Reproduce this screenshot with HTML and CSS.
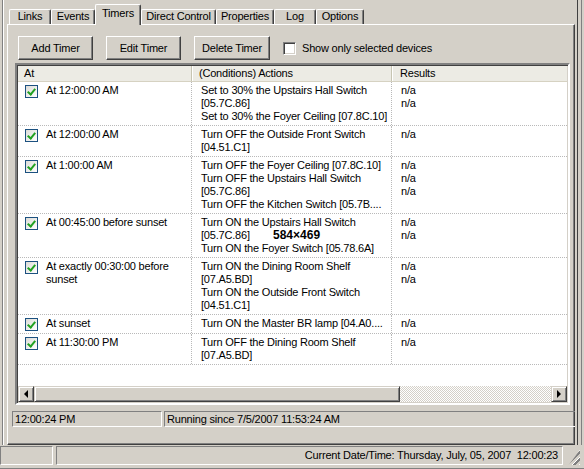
FILE: index.html
```html
<!DOCTYPE html>
<html lang="en">
<head>
  <meta charset="UTF-8">
  <title>Timers</title>
  <link rel="stylesheet" href="styles.css">
</head>
<body>
  <div class="window">
    <div class="workspace">
      <div class="frame-left"></div>
      <div class="tabctl">
        <div class="tabs">
          <div class="tab">Links</div>
          <div class="tab">Events</div>
          <div class="tab active">Timers</div>
          <div class="tab">Direct Control</div>
          <div class="tab">Properties</div>
          <div class="tab">Log</div>
          <div class="tab">Options</div>
        </div>
        <div class="panel">
          <div class="toolbar">
            <button class="btn">Add Timer</button>
            <button class="btn">Edit Timer</button>
            <button class="btn">Delete Timer</button>
            <label class="opt"><span class="opt-box"></span>Show only selected devices</label>
          </div>

          <div class="list">
            <div class="list-head">
              <div class="hcell">At</div>
              <div class="hcell">(Conditions) Actions</div>
              <div class="hcell">Results</div>
            </div>
            <div class="list-body">
              <div class="row">
                <div class="cell at"><span class="chk"></span><span>At 12:00:00 AM</span></div>
                <div class="cell">Set to 30% the Upstairs Hall Switch<br>[05.7C.86]<br>Set to 30% the Foyer Ceiling [07.8C.10]</div>
                <div class="cell res">n/a<br>n/a</div>
              </div>
              <div class="row">
                <div class="cell at"><span class="chk"></span><span>At 12:00:00 AM</span></div>
                <div class="cell">Turn OFF the Outside Front Switch<br>[04.51.C1]</div>
                <div class="cell res">n/a</div>
              </div>
              <div class="row">
                <div class="cell at"><span class="chk"></span><span>At 1:00:00 AM</span></div>
                <div class="cell">Turn OFF the Foyer Ceiling [07.8C.10]<br>Turn OFF the Upstairs Hall Switch<br>[05.7C.86]<br>Turn OFF the Kitchen Switch [05.7B....</div>
                <div class="cell res">n/a<br>n/a<br>n/a</div>
              </div>
              <div class="row">
                <div class="cell at"><span class="chk"></span><span>At 00:45:00 before sunset</span></div>
                <div class="cell">Turn ON the Upstairs Hall Switch<br>[05.7C.86]<br>Turn ON the Foyer Switch [05.78.6A]</div>
                <div class="cell res">n/a<br>n/a</div>
              </div>
              <div class="row">
                <div class="cell at"><span class="chk"></span><span>At exactly 00:30:00 before<br>sunset</span></div>
                <div class="cell">Turn ON the Dining Room Shelf<br>[07.A5.BD]<br>Turn ON the Outside Front Switch<br>[04.51.C1]</div>
                <div class="cell res">n/a<br>n/a</div>
              </div>
              <div class="row">
                <div class="cell at"><span class="chk"></span><span>At sunset</span></div>
                <div class="cell">Turn ON the Master BR lamp [04.A0....</div>
                <div class="cell res">n/a</div>
              </div>
              <div class="row">
                <div class="cell at"><span class="chk"></span><span>At 11:30:00 PM</span></div>
                <div class="cell">Turn OFF the Dining Room Shelf<br>[07.A5.BD]</div>
                <div class="cell res">n/a</div>
              </div>
              <div class="size-tag">584×469</div>
            </div>
            <div class="hscroll">
              <div class="sb-btn"><span class="arr-left"></span></div>
              <div class="sb-thumb"></div>
              <div class="sb-track"></div>
              <div class="sb-btn"><span class="arr-right"></span></div>
            </div>
          </div>

          <div class="status-row">
            <div class="sunk clock">12:00:24 PM</div>
            <div class="sunk since">Running since 7/5/2007 11:53:24 AM</div>
          </div>
        </div>
      </div>
      <div class="frame-right"></div>
    </div>

    <div class="statusbar">
      <div class="sb-pane first"></div>
      <div class="sb-pane main">Current Date/Time: Thursday, July, 05, 2007&nbsp; 12:00:23</div>
      <div class="grip"></div>
    </div>
  </div>
</body>
</html>
```

FILE: styles.css
```css
* { box-sizing: border-box; }
body { margin: 0; background: #d4d0c8; font-family: "Liberation Sans", Arial, sans-serif; font-size: 11px; letter-spacing: -0.2px; color: #000; }
.window { width: 584px; height: 469px; display: flex; flex-direction: column; overflow: hidden; background: #d4d0c8; }
.workspace { display: flex; height: 446px; }
.frame-left { width: 7px; background: linear-gradient(to right, #d4d0c8 2px, #808080 2px 3px, #fff 3px 4px, #d4d0c8 4px); }
.frame-right { flex: 1; background: linear-gradient(to right, #d4d0c8 2px, #404040 2px 3px, #d4d0c8 3px 6px, #808080 6px 7px, #d4d0c8 7px); }

/* tabs */
.tabctl { width: 568px; display: flex; flex-direction: column; padding-top: 4px; }
.tabs { display: flex; align-items: flex-end; height: 20px; padding-left: 2px; position: relative; z-index: 2; }
.tab { height: 15px; line-height: 13px; text-align: center; border: 1px solid #fff; border-bottom: none; border-right-color: #404040; box-shadow: inset -1px 0 #808080; border-radius: 2px 2px 0 0; }
.tab:nth-child(1) { width: 42px; }
.tab:nth-child(2) { width: 44px; }
.tab:nth-child(3) { width: 46px; }
.tab:nth-child(4) { width: 75px; }
.tab:nth-child(5) { width: 58px; }
.tab:nth-child(6) { width: 42px; }
.tab:nth-child(7) { width: 48px; }
.tab.active { height: 21px; line-height: 17px; background: #d4d0c8; margin-bottom: -1px; }
.panel { flex: 1; border: 1px solid #fff; border-right-color: #404040; border-bottom-color: #404040; box-shadow: inset -1px -1px #808080; padding: 11px 4px 0 7px; }

/* toolbar */
.toolbar { display: flex; align-items: center; gap: 13px; padding-left: 3px; height: 24px; }
.btn { width: 75px; height: 24px; font: inherit; letter-spacing: inherit; color: #000; background: #d4d0c8; border: 1px solid; border-color: #fff #404040 #404040 #fff; box-shadow: inset -1px -1px #808080; padding: 0; }
.btn:nth-child(3) { width: 76px; }
.opt { display: flex; align-items: center; gap: 6px; }
.opt-box { width: 13px; height: 13px; background: #fff; border: 1px solid; border-color: #808080 #fff #fff #808080; box-shadow: inset 1px 1px #404040, inset -1px -1px #d4d0c8; }

/* list view */
.list { margin-top: 3px; width: 555px; height: 342px; display: flex; flex-direction: column; border: 2px solid; border-color: #808080 #fff #fff #808080; box-shadow: inset 1px 1px #404040, inset -1px -1px #d4d0c8; padding: 1px; background: #fff; }
.list-head { display: grid; grid-template-columns: 174px 200px 1fr; height: 16px; background: #ecebe4; border-bottom: 1px solid #d6d2c2; }
.hcell { line-height: 15px; padding-left: 6px; border-right: 1px solid #c7c5b2; box-shadow: 1px 0 #fff; }
.hcell:nth-child(2) { padding-left: 7px; }
.hcell:nth-child(3) { padding-left: 8px; border-right: none; box-shadow: none; }
.list-body { flex: 1; position: relative; }
.row { display: grid; grid-template-columns: 174px 200px 1fr; border-bottom: 1px dotted #b9b9b9; }
.cell { padding: 2px 0 2px 9px; line-height: 13px; white-space: nowrap; border-right: 1px dotted #b9b9b9; overflow: hidden; }
.cell.res { border-right: none; }
.cell.at { display: flex; align-items: flex-start; gap: 8px; padding-left: 7px; }
.chk { width: 13px; height: 13px; margin-top: 1px; flex: none; border: 1px solid #1c5180; background: linear-gradient(135deg, #dcdcd7, #fff); position: relative; }
.chk::after { content: ""; position: absolute; left: 3px; top: 1px; width: 3px; height: 6px; border: solid #21a121; border-width: 0 2px 2px 0; transform: rotate(40deg); }
.size-tag { position: absolute; left: 255px; top: 146px; font-weight: bold; font-size: 12px; letter-spacing: 0; }

/* horizontal scrollbar */
.hscroll { display: flex; height: 16px; }
.sb-btn, .sb-thumb { background: #d4d0c8; border: 1px solid; border-color: #d4d0c8 #404040 #404040 #d4d0c8; box-shadow: inset 1px 1px #fff, inset -1px -1px #808080; display: flex; align-items: center; justify-content: center; }
.sb-btn { width: 16px; }
.sb-thumb { width: 366px; }
.sb-track { flex: 1; background: repeating-conic-gradient(#fff 0 25%, #d4d0c8 0 50%) 0 0 / 2px 2px; }
.arr-left { border: 4px solid transparent; border-right-color: #000; border-left: none; }
.arr-right { border: 4px solid transparent; border-left-color: #000; border-right: none; }

/* status row */
.status-row { display: flex; gap: 2px; margin: 6px 0 0 -3px; height: 16px; width: 571px; }
.sunk { border: 1px solid; border-color: #808080 #fff #fff #808080; line-height: 14px; padding-left: 2px; white-space: nowrap; }
.clock { width: 150px; }
.since { flex: 1; }

/* window status bar */
.statusbar { flex: 1; display: flex; gap: 3px; padding: 1px 4px 3px 0; border-bottom: 1px solid #808080; }
.sb-pane { border: 1px solid; border-color: #808080 #fff #fff #808080; line-height: 17px; }
.sb-pane.first { width: 53px; }
.sb-pane.main { flex: 1; text-align: right; padding-right: 4px; }
.grip { width: 14px; background: repeating-linear-gradient(135deg, transparent 0 2px, #fff 2px 3px, #808080 3px 5px); clip-path: polygon(100% 20%, 100% 100%, 20% 100%); }
```
